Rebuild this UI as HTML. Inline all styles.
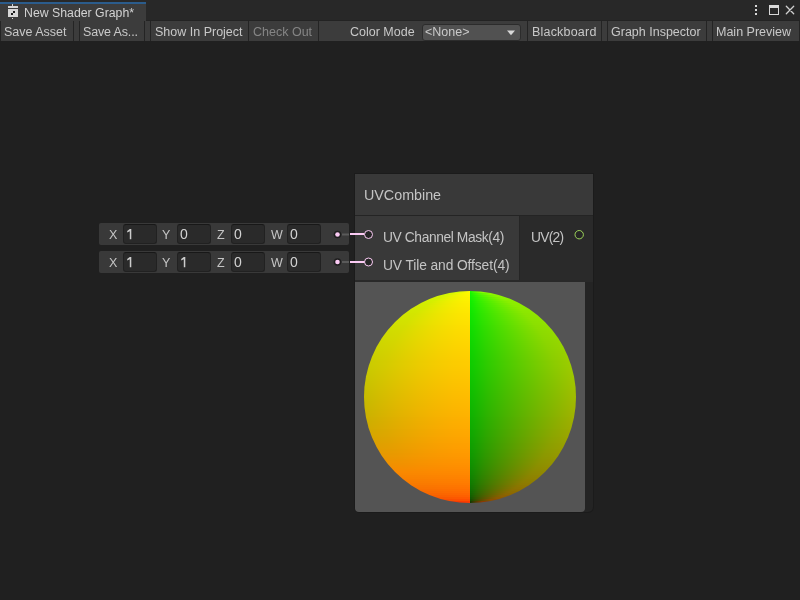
<!DOCTYPE html>
<html><head><meta charset="utf-8">
<style>
*{box-sizing:border-box;margin:0;padding:0}
html,body{width:800px;height:600px;overflow:hidden;background:#202020;font-family:"Liberation Sans",sans-serif;}
.a{position:absolute}
#top{left:0;top:0;width:800px;height:21px;background:#282828}
#tab{left:0;top:2px;width:146px;height:19px;background:#3c3c3c;border-top:2px solid #2b5c8c}
#tabtxt{left:24px;top:5px;font-size:12.3px;color:#d2d2d2;white-space:pre;line-height:16px}
#toolbar{left:0;top:20px;width:800px;height:21px;background:#3c3c3c;border-top:1px solid #232323}
.tb{position:absolute;top:22px;height:20px;font-size:12.5px;color:#c8c8c8;white-space:pre;line-height:20px}
.sep{position:absolute;top:21px;width:1px;height:20px;background:#242424}
.txt{position:absolute;white-space:pre;color:#c4c4c4}
#graph{left:0;top:41px;width:800px;height:559px;background:#202020}
.field{position:absolute;left:99px;width:250px;height:22px;background:#393939;border-radius:2px}
.inp{position:absolute;top:1px;height:20px;width:34px;background:#2a2a2a;border:1px solid #212121;border-top-color:#181818;border-radius:3px}
.lbl{position:absolute;font-size:12.5px;color:#c4c4c4;line-height:22px;top:1px}
.val{position:absolute;font-size:14px;color:#d2d2d2;line-height:20px;top:1px}
#node{left:355px;top:174px;width:238px;height:338px;background:#242424;border-radius:0 0 5px 5px;box-shadow:0 0 0 1px #1b1b1b}
.tb,.txt,.lbl,.val,#tabtxt{filter:grayscale(1)}
</style></head><body>
<div class="a" id="top"></div>
<div class="a" id="toolbar"></div>
<div class="a" id="tab"></div>
<svg class="a" style="left:8px;top:4px" width="11" height="16" viewBox="0 0 11 16">
<rect x="4" y="0" width="1" height="2" fill="#d6d6d6"/>
<rect x="0" y="2" width="10" height="2" fill="#d6d6d6"/>
<rect x="0" y="5" width="10" height="8" fill="#d6d6d6"/>
<rect x="5" y="7" width="2" height="2" fill="#1a1a1a"/>
<rect x="3" y="9" width="2" height="2" fill="#1a1a1a"/>
<rect x="4" y="14" width="1" height="1" fill="#d6d6d6"/>
</svg>
<div class="a" id="tabtxt">New Shader Graph*</div>
<!-- window icons -->
<svg class="a" style="left:750px;top:0px" width="50" height="20" viewBox="0 0 50 20">
<rect x="5" y="5" width="2" height="2" fill="#d8d8d8"/>
<rect x="5" y="9" width="2" height="2" fill="#d8d8d8"/>
<rect x="5" y="13" width="2" height="2" fill="#d8d8d8"/>
<rect x="19.5" y="5.5" width="9" height="9" fill="none" stroke="#d8d8d8" stroke-width="1"/>
<rect x="19" y="5" width="10" height="3" fill="#d8d8d8"/>
<path d="M36.3 6.3 L43.7 13.7 M43.7 6.3 L36.3 13.7" stroke="#d0d0d0" stroke-width="1.3" stroke-linecap="round"/>
</svg>
<div class="a" style="left:0;top:21px;width:1px;height:20px;background:#242424"></div>
<div class="sep" style="left:73px"></div>
<div class="sep" style="left:79px"></div>
<div class="sep" style="left:144px"></div>
<div class="sep" style="left:150px"></div>
<div class="sep" style="left:248px"></div>
<div class="sep" style="left:318px"></div>
<div class="sep" style="left:527px"></div>
<div class="sep" style="left:601px"></div>
<div class="sep" style="left:607px"></div>
<div class="sep" style="left:706px"></div>
<div class="sep" style="left:712px"></div>
<div class="a" style="left:799px;top:21px;width:1px;height:20px;background:#242424"></div>
<div class="tb" style="left:4px">Save Asset</div>
<div class="tb" style="left:83px;letter-spacing:-0.15px">Save As...</div>
<div class="tb" style="left:155px">Show In Project</div>
<div class="tb" style="left:253px;color:#858585">Check Out</div>
<div class="tb" style="left:350px">Color Mode</div>
<div class="a" style="left:422px;top:24px;width:99px;height:17px;background:#515151;border:1px solid #2c2c2c;border-radius:3px"></div>
<div class="tb" style="left:425px;top:23px;line-height:18px">&lt;None&gt;</div>
<svg class="a" style="left:506px;top:29.5px" width="10" height="6"><path d="M1 0.5 L9 0.5 L5 5.2 Z" fill="#d8d8d8"/></svg>
<div class="tb" style="left:532px;letter-spacing:0.2px">Blackboard</div>
<div class="tb" style="left:611px">Graph Inspector</div>
<div class="tb" style="left:716px">Main Preview</div>

<!-- fields -->
<div class="field" style="top:223px">
 <div class="lbl" style="left:10px">X</div><div class="inp" style="left:24px"></div><svg class="a" style="left:27.7px;top:5.9px" width="5" height="11" viewBox="0 0 5 11"><polygon points="0.2,2.0 2.8,0 4.3,0 4.3,10.2 2.8,10.2 2.8,2.2 0.2,3.4" fill="#cccccc"/></svg>
 <div class="lbl" style="left:63px">Y</div><div class="inp" style="left:78px"></div><div class="val" style="left:81px">0</div>
 <div class="lbl" style="left:118px">Z</div><div class="inp" style="left:132px"></div><div class="val" style="left:135px">0</div>
 <div class="lbl" style="left:172px">W</div><div class="inp" style="left:188px"></div><div class="val" style="left:191px">0</div>
</div>
<div class="field" style="top:251px">
 <div class="lbl" style="left:10px">X</div><div class="inp" style="left:24px"></div><svg class="a" style="left:27.7px;top:5.9px" width="5" height="11" viewBox="0 0 5 11"><polygon points="0.2,2.0 2.8,0 4.3,0 4.3,10.2 2.8,10.2 2.8,2.2 0.2,3.4" fill="#cccccc"/></svg>
 <div class="lbl" style="left:63px">Y</div><div class="inp" style="left:78px"></div><svg class="a" style="left:81.7px;top:5.9px" width="5" height="11" viewBox="0 0 5 11"><polygon points="0.2,2.0 2.8,0 4.3,0 4.3,10.2 2.8,10.2 2.8,2.2 0.2,3.4" fill="#cccccc"/></svg>
 <div class="lbl" style="left:118px">Z</div><div class="inp" style="left:132px"></div><div class="val" style="left:135px">0</div>
 <div class="lbl" style="left:172px">W</div><div class="inp" style="left:188px"></div><div class="val" style="left:191px">0</div>
</div>
<svg class="a" style="left:330px;top:222px" width="50" height="50" viewBox="0 0 50 50">
<circle cx="7.5" cy="12.5" r="3.8" fill="#1e1e1e"/><circle cx="7.5" cy="12.5" r="2.3" fill="#fbcbf4"/>
<rect x="12" y="11.5" width="7" height="2" fill="#5a5a5a"/>
<circle cx="7.5" cy="40" r="3.8" fill="#1e1e1e"/><circle cx="7.5" cy="40" r="2.3" fill="#fbcbf4"/>
<rect x="12" y="39" width="7" height="2" fill="#5a5a5a"/>
</svg>

<!-- node -->
<div class="a" id="node"></div>
<div class="a" style="left:355px;top:174px;width:238px;height:41px;background:#393939"></div>
<div class="a" style="left:355px;top:215px;width:238px;height:1px;background:#242424"></div>
<div class="a" style="left:355px;top:216px;width:164px;height:64px;background:#393939"></div>
<div class="a" style="left:519px;top:216px;width:74px;height:64px;background:#2a2a2a;border-left:1px solid #252525"></div>
<div class="a" style="left:355px;top:280px;width:238px;height:2px;background:#292929"></div>
<div class="txt" style="left:364px;top:186px;font-size:14.3px;line-height:18px">UVCombine</div>
<div class="txt" style="left:383px;top:230px;font-size:13.8px;line-height:16px;letter-spacing:-0.4px">UV Channel Mask(4)</div>
<div class="txt" style="left:383px;top:258px;font-size:13.8px;line-height:16px;letter-spacing:-0.1px">UV Tile and Offset(4)</div>
<div class="txt" style="left:531px;top:230px;font-size:13.8px;line-height:16px;letter-spacing:-0.75px">UV(2)</div>
<svg class="a" style="left:355px;top:216px" width="238" height="64" viewBox="0 0 238 64">
<circle cx="224.2" cy="18.7" r="4.2" fill="#262626" stroke="#9ed65a" stroke-width="1"/>
</svg>
<div class="a" style="left:355px;top:282px;width:230px;height:230px;background:#545454;border-radius:0 0 4px 4px;overflow:hidden">
 <div class="a" style="left:9px;top:9px;width:212px;height:212px;border-radius:50%;overflow:hidden">
 <style>#sph i{position:absolute;left:0;width:212px;height:2px;display:block}</style>
 <div id="sph">
<i style="top:0px;background:linear-gradient(90deg,#c7fa00 0.0px,#d4fa00 93.9px,#e0fa00 96.3px,#ebfa00 98.7px,#f4fa00 101.2px,#fbfa00 103.6px,#fffa00 106.0px,#0dfa00 106.0px,#2dfa00 108.4px,#47fa00 110.8px,#5ffa00 113.3px,#76fa00 115.7px,#8bfa00 118.1px,#a1fa00 212.0px)"></i>
<i style="top:2px;background:linear-gradient(90deg,#c7f600 0.0px,#d4f600 85.1px,#e0f600 89.3px,#ebf600 93.5px,#f4f600 97.7px,#fbf600 101.8px,#fff600 106.0px,#0df600 106.0px,#2df600 110.2px,#47f600 114.3px,#5ff600 118.5px,#76f600 122.7px,#8bf600 126.9px,#a1f600 212.0px)"></i>
<i style="top:4px;background:linear-gradient(90deg,#c7f400 0.0px,#d4f400 79.2px,#e0f400 84.6px,#ebf400 89.9px,#f4f400 95.3px,#fbf400 100.6px,#fff400 106.0px,#0df400 106.0px,#2df400 111.4px,#47f400 116.7px,#5ff400 122.1px,#76f400 127.4px,#8bf400 132.8px,#a1f400 212.0px)"></i>
<i style="top:6px;background:linear-gradient(90deg,#c7f100 0.0px,#d4f100 74.4px,#e0f100 80.7px,#ebf100 87.1px,#f4f100 93.4px,#fbf100 99.7px,#fff100 106.0px,#0df100 106.0px,#2df100 112.3px,#47f100 118.6px,#5ff100 124.9px,#76f100 131.3px,#8bf100 137.6px,#a1f100 212.0px)"></i>
<i style="top:8px;background:linear-gradient(90deg,#c7f000 0.0px,#d4f000 70.4px,#e0f000 77.5px,#ebf000 84.6px,#f4f000 91.8px,#fbf000 98.9px,#fff000 106.0px,#0df000 106.0px,#2df000 113.1px,#47f000 120.2px,#5ff000 127.4px,#76f000 134.5px,#8bf000 141.6px,#a1f000 212.0px)"></i>
<i style="top:10px;background:linear-gradient(90deg,#c7ee00 0.0px,#d4ee00 66.8px,#e0ee00 74.7px,#ebee00 82.5px,#f4ee00 90.3px,#fbee00 98.2px,#ffee00 106.0px,#0dee00 106.0px,#2dee00 113.8px,#47ee00 121.7px,#5fee00 129.5px,#76ee00 137.3px,#8bee00 145.2px,#a1ee00 212.0px)"></i>
<i style="top:12px;background:linear-gradient(90deg,#c7ec00 0.0px,#d4ec00 63.6px,#e0ec00 72.1px,#ebec00 80.6px,#f4ec00 89.0px,#fbec00 97.5px,#ffec00 106.0px,#0dec00 106.0px,#2dec00 114.5px,#47ec00 123.0px,#5fec00 131.4px,#76ec00 139.9px,#8bec00 148.4px,#a1ec00 212.0px)"></i>
<i style="top:14px;background:linear-gradient(90deg,#c7eb00 0.0px,#d4eb00 60.7px,#e0eb00 69.8px,#ebeb00 78.8px,#f4eb00 87.9px,#fbeb00 96.9px,#ffeb00 106.0px,#0deb00 106.0px,#2deb00 115.1px,#47eb00 124.1px,#5feb00 133.2px,#76eb00 142.2px,#8beb00 151.3px,#a1eb00 212.0px)"></i>
<i style="top:16px;background:linear-gradient(90deg,#c7e900 0.0px,#d4e900 58.0px,#e0e900 67.6px,#ebe900 77.2px,#f4e900 86.8px,#fbe900 96.4px,#ffe900 106.0px,#0de900 106.0px,#2de900 115.6px,#47e900 125.2px,#5fe900 134.8px,#76e900 144.4px,#8be900 154.0px,#a1e900 212.0px)"></i>
<i style="top:18px;background:linear-gradient(90deg,#c7e800 0.0px,#d4e800 55.5px,#e0e800 65.6px,#ebe800 75.7px,#f4e800 85.8px,#fbe800 95.9px,#ffe800 106.0px,#0de800 106.0px,#2de800 116.1px,#47e800 126.2px,#5fe800 136.3px,#76e800 146.4px,#8be800 156.5px,#a1e800 212.0px)"></i>
<i style="top:20px;background:linear-gradient(90deg,#c7e700 0.0px,#d4e700 53.2px,#e0e700 63.8px,#ebe700 74.3px,#f4e700 84.9px,#fbe700 95.4px,#ffe700 106.0px,#0de700 106.0px,#2de700 116.6px,#47e700 127.1px,#5fe700 137.7px,#76e700 148.2px,#8be700 158.8px,#a1e700 212.0px)"></i>
<i style="top:22px;background:linear-gradient(90deg,#c7e500 0.0px,#d4e500 51.1px,#e0e500 62.0px,#ebe500 73.0px,#f4e500 84.0px,#fbe500 95.0px,#ffe500 106.0px,#0de500 106.0px,#2de500 117.0px,#47e500 128.0px,#5fe500 139.0px,#76e500 150.0px,#8be500 160.9px,#a1e500 212.0px)"></i>
<i style="top:24px;background:linear-gradient(90deg,#c7e400 0.0px,#d4e400 49.0px,#e0e400 60.4px,#ebe400 71.8px,#f4e400 83.2px,#fbe400 94.6px,#ffe400 106.0px,#0de400 106.0px,#2de400 117.4px,#47e400 128.8px,#5fe400 140.2px,#76e400 151.6px,#8be400 163.0px,#a1e400 212.0px)"></i>
<i style="top:26px;background:linear-gradient(90deg,#c7e300 0.0px,#d4e300 47.1px,#e0e300 58.9px,#ebe300 70.7px,#f4e300 82.4px,#fbe300 94.2px,#ffe300 106.0px,#0de300 106.0px,#2de300 117.8px,#47e300 129.6px,#5fe300 141.3px,#76e300 153.1px,#8be300 164.9px,#a1e300 212.0px)"></i>
<i style="top:28px;background:linear-gradient(90deg,#c7e200 0.0px,#d4e200 45.3px,#e0e200 57.4px,#ebe200 69.6px,#f4e200 81.7px,#fbe200 93.9px,#ffe200 106.0px,#0de200 106.0px,#2de200 118.1px,#47e200 130.3px,#5fe200 142.4px,#76e200 154.6px,#8be200 166.7px,#a1e200 212.0px)"></i>
<i style="top:30px;background:linear-gradient(90deg,#c7e100 0.0px,#d4e100 43.6px,#e0e100 56.1px,#ebe100 68.5px,#f4e100 81.0px,#fbe100 93.5px,#ffe100 106.0px,#0de100 106.0px,#2de100 118.5px,#47e100 131.0px,#5fe100 143.5px,#76e100 155.9px,#8be100 168.4px,#a1e100 212.0px)"></i>
<i style="top:32px;background:linear-gradient(90deg,#c7e000 0.0px,#d4e000 42.0px,#e0e000 54.8px,#ebe000 67.6px,#f4e000 80.4px,#fbe000 93.2px,#ffe000 106.0px,#0de000 106.0px,#2de000 118.8px,#47e000 131.6px,#5fe000 144.4px,#76e000 157.2px,#8be000 170.0px,#a1e000 212.0px)"></i>
<i style="top:34px;background:linear-gradient(90deg,#c7de00 0.0px,#d4de00 40.4px,#e0de00 53.5px,#ebde00 66.6px,#f4de00 79.8px,#fbde00 92.9px,#ffde00 106.0px,#0dde00 106.0px,#2dde00 119.1px,#47de00 132.2px,#5fde00 145.4px,#76de00 158.5px,#8bde00 171.6px,#a1de00 212.0px)"></i>
<i style="top:36px;background:linear-gradient(90deg,#c7dd00 0.0px,#d4dd00 38.9px,#e0dd00 52.4px,#ebdd00 65.8px,#f4dd00 79.2px,#fbdd00 92.6px,#ffdd00 106.0px,#0ddd00 106.0px,#2ddd00 119.4px,#47dd00 132.8px,#5fdd00 146.2px,#76dd00 159.6px,#8bdd00 173.1px,#a1dd00 212.0px)"></i>
<i style="top:38px;background:linear-gradient(90deg,#c7dc00 0.0px,#d4dc00 37.5px,#e0dc00 51.2px,#ebdc00 64.9px,#f4dc00 78.6px,#fbdc00 92.3px,#ffdc00 106.0px,#0ddc00 106.0px,#2ddc00 119.7px,#47dc00 133.4px,#5fdc00 147.1px,#76dc00 160.8px,#8bdc00 174.5px,#a1dc00 212.0px)"></i>
<i style="top:40px;background:linear-gradient(90deg,#c7db00 0.0px,#d4db00 36.2px,#e0db00 50.2px,#ebdb00 64.1px,#f4db00 78.1px,#fbdb00 92.0px,#ffdb00 106.0px,#0ddb00 106.0px,#2ddb00 120.0px,#47db00 133.9px,#5fdb00 147.9px,#76db00 161.8px,#8bdb00 175.8px,#a1db00 212.0px)"></i>
<i style="top:42px;background:linear-gradient(90deg,#c7da00 0.0px,#d4da00 35.0px,#e0da00 49.2px,#ebda00 63.4px,#f4da00 77.6px,#fbda00 91.8px,#ffda00 106.0px,#0dda00 106.0px,#2dda00 120.2px,#47da00 134.4px,#5fda00 148.6px,#76da00 162.8px,#8bda00 177.0px,#a1da00 212.0px)"></i>
<i style="top:44px;background:linear-gradient(90deg,#c7d900 0.0px,#d4d900 33.8px,#e0d900 48.2px,#ebd900 62.7px,#f4d900 77.1px,#fbd900 91.6px,#ffd900 106.0px,#0dd900 106.0px,#2dd900 120.4px,#47d900 134.9px,#5fd900 149.3px,#76d900 163.8px,#8bd900 178.2px,#a1d900 212.0px)"></i>
<i style="top:46px;background:linear-gradient(90deg,#c7d800 0.0px,#d4d800 32.6px,#e0d800 47.3px,#ebd800 62.0px,#f4d800 76.6px,#fbd800 91.3px,#ffd800 106.0px,#0dd800 106.0px,#2dd800 120.7px,#47d800 135.4px,#5fd800 150.0px,#76d800 164.7px,#8bd800 179.4px,#a1d800 212.0px)"></i>
<i style="top:48px;background:linear-gradient(90deg,#c7d700 0.0px,#d4d700 31.5px,#e0d700 46.4px,#ebd700 61.3px,#f4d700 76.2px,#fbd700 91.1px,#ffd700 106.0px,#0dd700 106.0px,#2dd700 120.9px,#47d700 135.8px,#5fd700 150.7px,#76d700 165.6px,#8bd700 180.5px,#a1d700 212.0px)"></i>
<i style="top:50px;background:linear-gradient(90deg,#c7d600 0.0px,#d4d600 30.5px,#e0d600 45.6px,#ebd600 60.7px,#f4d600 75.8px,#fbd600 90.9px,#ffd600 106.0px,#0dd600 106.0px,#2dd600 121.1px,#47d600 136.2px,#5fd600 151.3px,#76d600 166.4px,#8bd600 181.5px,#a1d600 212.0px)"></i>
<i style="top:52px;background:linear-gradient(90deg,#c7d500 0.0px,#d4d500 29.5px,#e0d500 44.8px,#ebd500 60.1px,#f4d500 75.4px,#fbd500 90.7px,#ffd500 106.0px,#0dd500 106.0px,#2dd500 121.3px,#47d500 136.6px,#5fd500 151.9px,#76d500 167.2px,#8bd500 182.5px,#a1d500 212.0px)"></i>
<i style="top:54px;background:linear-gradient(90deg,#c7d400 0.0px,#d4d400 28.6px,#e0d400 44.1px,#ebd400 59.5px,#f4d400 75.0px,#fbd400 90.5px,#ffd400 106.0px,#0dd400 106.0px,#2dd400 121.5px,#47d400 137.0px,#5fd400 152.5px,#76d400 167.9px,#8bd400 183.4px,#a1d400 212.0px)"></i>
<i style="top:56px;background:linear-gradient(90deg,#c7d300 0.0px,#d4d300 27.7px,#e0d300 43.3px,#ebd300 59.0px,#f4d300 74.7px,#fbd300 90.3px,#ffd300 106.0px,#0dd300 106.0px,#2dd300 121.7px,#47d300 137.3px,#5fd300 153.0px,#76d300 168.7px,#8bd300 184.3px,#a1d300 212.0px)"></i>
<i style="top:58px;background:linear-gradient(90deg,#c7d200 0.0px,#d4d200 26.8px,#e0d200 42.7px,#ebd200 58.5px,#f4d200 74.3px,#fbd200 90.2px,#ffd200 106.0px,#0dd200 106.0px,#2dd200 121.8px,#47d200 137.7px,#5fd200 153.5px,#76d200 169.3px,#8bd200 185.2px,#a1d200 212.0px)"></i>
<i style="top:60px;background:linear-gradient(90deg,#c7d100 0.0px,#d4d100 26.0px,#e0d100 42.0px,#ebd100 58.0px,#f4d100 74.0px,#fbd100 90.0px,#ffd100 106.0px,#0dd100 106.0px,#2dd100 122.0px,#47d100 138.0px,#5fd100 154.0px,#76d100 170.0px,#8bd100 186.0px,#a1d100 212.0px)"></i>
<i style="top:62px;background:linear-gradient(90deg,#c7d000 0.0px,#d4d000 25.3px,#e0d000 41.4px,#ebd000 57.6px,#f4d000 73.7px,#fbd000 89.9px,#ffd000 106.0px,#0dd000 106.0px,#2dd000 122.1px,#47d000 138.3px,#5fd000 154.4px,#76d000 170.6px,#8bd000 186.7px,#a1d000 212.0px)"></i>
<i style="top:64px;background:linear-gradient(90deg,#c7cf00 0.0px,#d4cf00 24.5px,#e0cf00 40.8px,#ebcf00 57.1px,#f4cf00 73.4px,#fbcf00 89.7px,#ffcf00 106.0px,#0dcf00 106.0px,#2dcf00 122.3px,#47cf00 138.6px,#5fcf00 154.9px,#76cf00 171.2px,#8bcf00 187.5px,#a1cf00 212.0px)"></i>
<i style="top:66px;background:linear-gradient(90deg,#c7ce00 0.0px,#d4ce00 23.9px,#e0ce00 40.3px,#ebce00 56.7px,#f4ce00 73.1px,#fbce00 89.6px,#ffce00 106.0px,#0dce00 106.0px,#2dce00 122.4px,#47ce00 138.9px,#5fce00 155.3px,#76ce00 171.7px,#8bce00 188.1px,#a1ce00 212.0px)"></i>
<i style="top:68px;background:linear-gradient(90deg,#c7cd00 0.0px,#d4cd00 23.2px,#e0cd00 39.8px,#ebcd00 56.3px,#f4cd00 72.9px,#fbcd00 89.4px,#ffcd00 106.0px,#0dcd00 106.0px,#2dcd00 122.6px,#47cd00 139.1px,#5fcd00 155.7px,#76cd00 172.2px,#8bcd00 188.8px,#a1cd00 212.0px)"></i>
<i style="top:70px;background:linear-gradient(90deg,#c7cc00 0.0px,#d4cc00 22.6px,#e0cc00 39.3px,#ebcc00 56.0px,#f4cc00 72.6px,#fbcc00 89.3px,#ffcc00 106.0px,#0dcc00 106.0px,#2dcc00 122.7px,#47cc00 139.4px,#5fcc00 156.0px,#76cc00 172.7px,#8bcc00 189.4px,#a1cc00 212.0px)"></i>
<i style="top:72px;background:linear-gradient(90deg,#c7cc00 0.0px,#d4cc00 22.1px,#e0cc00 38.8px,#ebcc00 55.6px,#f4cc00 72.4px,#fbcc00 89.2px,#ffcc00 106.0px,#0dcc00 106.0px,#2dcc00 122.8px,#47cc00 139.6px,#5fcc00 156.4px,#76cc00 173.2px,#8bcc00 189.9px,#a1cc00 212.0px)"></i>
<i style="top:74px;background:linear-gradient(90deg,#c7cb00 0.0px,#d4cb00 21.5px,#e0cb00 38.4px,#ebcb00 55.3px,#f4cb00 72.2px,#fbcb00 89.1px,#ffcb00 106.0px,#0dcb00 106.0px,#2dcb00 122.9px,#47cb00 139.8px,#5fcb00 156.7px,#76cb00 173.6px,#8bcb00 190.5px,#a1cb00 212.0px)"></i>
<i style="top:76px;background:linear-gradient(90deg,#c7ca00 0.0px,#d4ca00 21.0px,#e0ca00 38.0px,#ebca00 55.0px,#f4ca00 72.0px,#fbca00 89.0px,#ffca00 106.0px,#0dca00 106.0px,#2dca00 123.0px,#47ca00 140.0px,#5fca00 157.0px,#76ca00 174.0px,#8bca00 191.0px,#a1ca00 212.0px)"></i>
<i style="top:78px;background:linear-gradient(90deg,#c7c900 0.0px,#d4c900 20.6px,#e0c900 37.7px,#ebc900 54.7px,#f4c900 71.8px,#fbc900 88.9px,#ffc900 106.0px,#0dc900 106.0px,#2dc900 123.1px,#47c900 140.2px,#5fc900 157.3px,#76c900 174.3px,#8bc900 191.4px,#a1c900 212.0px)"></i>
<i style="top:80px;background:linear-gradient(90deg,#c7c800 0.0px,#d4c800 20.2px,#e0c800 37.3px,#ebc800 54.5px,#f4c800 71.7px,#fbc800 88.8px,#ffc800 106.0px,#0dc800 106.0px,#2dc800 123.2px,#47c800 140.3px,#5fc800 157.5px,#76c800 174.7px,#8bc800 191.8px,#a1c800 212.0px)"></i>
<i style="top:82px;background:linear-gradient(90deg,#c7c700 0.0px,#d4c700 19.8px,#e0c700 37.0px,#ebc700 54.3px,#f4c700 71.5px,#fbc700 88.8px,#ffc700 106.0px,#0dc700 106.0px,#2dc700 123.2px,#47c700 140.5px,#5fc700 157.7px,#76c700 175.0px,#8bc700 192.2px,#a1c700 212.0px)"></i>
<i style="top:84px;background:linear-gradient(90deg,#c7c600 0.0px,#d4c600 19.4px,#e0c600 36.7px,#ebc600 54.1px,#f4c600 71.4px,#fbc600 88.7px,#ffc600 106.0px,#0dc600 106.0px,#2dc600 123.3px,#47c600 140.6px,#5fc600 157.9px,#76c600 175.3px,#8bc600 192.6px,#a1c600 212.0px)"></i>
<i style="top:86px;background:linear-gradient(90deg,#c7c500 0.0px,#d4c500 19.1px,#e0c500 36.5px,#ebc500 53.9px,#f4c500 71.2px,#fbc500 88.6px,#ffc500 106.0px,#0dc500 106.0px,#2dc500 123.4px,#47c500 140.8px,#5fc500 158.1px,#76c500 175.5px,#8bc500 192.9px,#a1c500 212.0px)"></i>
<i style="top:88px;background:linear-gradient(90deg,#c7c400 0.0px,#d4c400 18.8px,#e0c400 36.2px,#ebc400 53.7px,#f4c400 71.1px,#fbc400 88.6px,#ffc400 106.0px,#0dc400 106.0px,#2dc400 123.4px,#47c400 140.9px,#5fc400 158.3px,#76c400 175.8px,#8bc400 193.2px,#a1c400 212.0px)"></i>
<i style="top:90px;background:linear-gradient(90deg,#c7c300 0.0px,#d4c300 18.6px,#e0c300 36.0px,#ebc300 53.5px,#f4c300 71.0px,#fbc300 88.5px,#ffc300 106.0px,#0dc300 106.0px,#2dc300 123.5px,#47c300 141.0px,#5fc300 158.5px,#76c300 176.0px,#8bc300 193.4px,#a1c300 212.0px)"></i>
<i style="top:92px;background:linear-gradient(90deg,#c7c200 0.0px,#d4c200 18.3px,#e0c200 35.9px,#ebc200 53.4px,#f4c200 70.9px,#fbc200 88.5px,#ffc200 106.0px,#0dc200 106.0px,#2dc200 123.5px,#47c200 141.1px,#5fc200 158.6px,#76c200 176.1px,#8bc200 193.7px,#a1c200 212.0px)"></i>
<i style="top:94px;background:linear-gradient(90deg,#c7c100 0.0px,#d4c100 18.1px,#e0c100 35.7px,#ebc100 53.3px,#f4c100 70.9px,#fbc100 88.4px,#ffc100 106.0px,#0dc100 106.0px,#2dc100 123.6px,#47c100 141.1px,#5fc100 158.7px,#76c100 176.3px,#8bc100 193.9px,#a1c100 212.0px)"></i>
<i style="top:96px;background:linear-gradient(90deg,#c7c000 0.0px,#d4c000 18.0px,#e0c000 35.6px,#ebc000 53.2px,#f4c000 70.8px,#fbc000 88.4px,#ffc000 106.0px,#0dc000 106.0px,#2dc000 123.6px,#47c000 141.2px,#5fc000 158.8px,#76c000 176.4px,#8bc000 194.0px,#a1c000 212.0px)"></i>
<i style="top:98px;background:linear-gradient(90deg,#c7bf00 0.0px,#d4bf00 17.9px,#e0bf00 35.5px,#ebbf00 53.1px,#f4bf00 70.7px,#fbbf00 88.4px,#ffbf00 106.0px,#0dbf00 106.0px,#2dbf00 123.6px,#47bf00 141.3px,#5fbf00 158.9px,#76bf00 176.5px,#8bbf00 194.1px,#a1bf00 212.0px)"></i>
<i style="top:100px;background:linear-gradient(90deg,#c7be00 0.0px,#d4be00 17.8px,#e0be00 35.4px,#ebbe00 53.1px,#f4be00 70.7px,#fbbe00 88.4px,#ffbe00 106.0px,#0dbe00 106.0px,#2dbe00 123.6px,#47be00 141.3px,#5fbe00 158.9px,#76be00 176.6px,#8bbe00 194.2px,#a1be00 212.0px)"></i>
<i style="top:102px;background:linear-gradient(90deg,#c7bd00 0.0px,#d4bd00 17.7px,#e0bd00 35.4px,#ebbd00 53.0px,#f4bd00 70.7px,#fbbd00 88.3px,#ffbd00 106.0px,#0dbd00 106.0px,#2dbd00 123.7px,#47bd00 141.3px,#5fbd00 159.0px,#76bd00 176.6px,#8bbd00 194.3px,#a1bd00 212.0px)"></i>
<i style="top:104px;background:linear-gradient(90deg,#c7bc00 0.0px,#d4bc00 17.7px,#e0bc00 35.3px,#ebbc00 53.0px,#f4bc00 70.7px,#fbbc00 88.3px,#ffbc00 106.0px,#0dbc00 106.0px,#2dbc00 123.7px,#47bc00 141.3px,#5fbc00 159.0px,#76bc00 176.7px,#8bbc00 194.3px,#a1bc00 212.0px)"></i>
<i style="top:106px;background:linear-gradient(90deg,#c7bb00 0.0px,#d4bb00 17.7px,#e0bb00 35.3px,#ebbb00 53.0px,#f4bb00 70.7px,#fbbb00 88.3px,#ffbb00 106.0px,#0dbb00 106.0px,#2dbb00 123.7px,#47bb00 141.3px,#5fbb00 159.0px,#76bb00 176.7px,#8bbb00 194.3px,#a1bb00 212.0px)"></i>
<i style="top:108px;background:linear-gradient(90deg,#c7ba00 0.0px,#d4ba00 17.7px,#e1ba00 35.4px,#ebba00 53.0px,#f4ba00 70.7px,#fbba00 88.3px,#ffba00 106.0px,#0dba00 106.0px,#2dba00 123.7px,#47ba00 141.3px,#5fba00 159.0px,#76ba00 176.6px,#8bba00 194.3px,#a1ba00 212.0px)"></i>
<i style="top:110px;background:linear-gradient(90deg,#c7b900 0.0px,#d4b900 17.8px,#e1b900 35.4px,#ebb900 53.1px,#f4b900 70.7px,#fbb900 88.4px,#ffb900 106.0px,#0db900 106.0px,#2db900 123.6px,#47b900 141.3px,#5fb900 158.9px,#76b900 176.6px,#8bb900 194.2px,#a1b900 212.0px)"></i>
<i style="top:112px;background:linear-gradient(90deg,#c7b800 0.0px,#d5b800 17.9px,#e1b800 35.5px,#ebb800 53.1px,#f4b800 70.7px,#fbb800 88.4px,#ffb800 106.0px,#0db800 106.0px,#2db800 123.6px,#47b800 141.3px,#5fb800 158.9px,#76b800 176.5px,#8bb800 194.1px,#a1b800 212.0px)"></i>
<i style="top:114px;background:linear-gradient(90deg,#c8b700 0.0px,#d5b700 18.0px,#e1b700 35.6px,#ebb700 53.2px,#f4b700 70.8px,#fbb700 88.4px,#ffb700 106.0px,#0db700 106.0px,#2db700 123.6px,#47b700 141.2px,#5fb700 158.8px,#76b700 176.4px,#8bb700 194.0px,#a1b700 212.0px)"></i>
<i style="top:116px;background:linear-gradient(90deg,#c8b600 0.0px,#d5b600 18.1px,#e1b600 35.7px,#ecb600 53.3px,#f4b600 70.9px,#fbb600 88.4px,#ffb600 106.0px,#0db600 106.0px,#2db600 123.6px,#47b600 141.1px,#5fb600 158.7px,#76b600 176.3px,#8bb600 193.9px,#a1b600 212.0px)"></i>
<i style="top:118px;background:linear-gradient(90deg,#c8b500 0.0px,#d5b500 18.3px,#e1b500 35.9px,#ecb500 53.4px,#f4b500 70.9px,#fbb500 88.5px,#ffb500 106.0px,#0db500 106.0px,#2db500 123.5px,#47b500 141.1px,#5fb500 158.6px,#76b500 176.1px,#8bb500 193.7px,#a1b500 212.0px)"></i>
<i style="top:120px;background:linear-gradient(90deg,#c9b400 0.0px,#d6b400 18.6px,#e2b400 36.0px,#ecb400 53.5px,#f5b400 71.0px,#fbb400 88.5px,#ffb400 106.0px,#0db400 106.0px,#2db400 123.5px,#47b400 141.0px,#5fb400 158.5px,#76b400 176.0px,#8bb400 193.4px,#a1b400 212.0px)"></i>
<i style="top:122px;background:linear-gradient(90deg,#c9b300 0.0px,#d6b300 18.8px,#e2b300 36.2px,#ecb300 53.7px,#f5b300 71.1px,#fbb300 88.6px,#ffb300 106.0px,#0db300 106.0px,#2db300 123.4px,#47b300 140.9px,#5fb300 158.3px,#76b300 175.8px,#8bb300 193.2px,#a1b300 212.0px)"></i>
<i style="top:124px;background:linear-gradient(90deg,#cab200 0.0px,#d7b200 19.1px,#e2b200 36.5px,#ecb200 53.9px,#f5b200 71.2px,#fbb200 88.6px,#ffb200 106.0px,#0db200 106.0px,#2db200 123.4px,#47b200 140.8px,#5fb200 158.1px,#76b200 175.5px,#8bb200 192.9px,#a1b200 212.0px)"></i>
<i style="top:126px;background:linear-gradient(90deg,#cbb000 0.0px,#d7b000 19.4px,#e2b000 36.7px,#ecb000 54.1px,#f5b000 71.4px,#fbb000 88.7px,#ffb000 106.0px,#0db000 106.0px,#2db000 123.3px,#47b000 140.6px,#5fb000 157.9px,#76b000 175.3px,#8bb000 192.6px,#a1b000 212.0px)"></i>
<i style="top:128px;background:linear-gradient(90deg,#cbaf00 0.0px,#d8af00 19.8px,#e3af00 37.0px,#edaf00 54.3px,#f5af00 71.5px,#fbaf00 88.8px,#ffaf00 106.0px,#0daf00 106.0px,#2daf00 123.2px,#47af00 140.5px,#5faf00 157.7px,#76af00 175.0px,#8baf00 192.2px,#a1af00 212.0px)"></i>
<i style="top:130px;background:linear-gradient(90deg,#ccae00 0.0px,#d8ae00 20.2px,#e3ae00 37.3px,#edae00 54.5px,#f5ae00 71.7px,#fcae00 88.8px,#ffae00 106.0px,#0dae00 106.0px,#2dae00 123.2px,#47ae00 140.3px,#5fae00 157.5px,#76ae00 174.7px,#8bae00 191.8px,#a1ae00 212.0px)"></i>
<i style="top:132px;background:linear-gradient(90deg,#cdad00 0.0px,#d9ad00 20.6px,#e4ad00 37.7px,#edad00 54.7px,#f5ad00 71.8px,#fcad00 88.9px,#ffad00 106.0px,#0dad00 106.0px,#2dad00 123.1px,#47ad00 140.2px,#5fad00 157.3px,#76ad00 174.3px,#8bad00 191.4px,#a1ad00 212.0px)"></i>
<i style="top:134px;background:linear-gradient(90deg,#ceac00 0.0px,#daac00 21.0px,#e4ac00 38.0px,#eeac00 55.0px,#f6ac00 72.0px,#fcac00 89.0px,#ffac00 106.0px,#0dac00 106.0px,#2dac00 123.0px,#47ac00 140.0px,#5fac00 157.0px,#76ac00 174.0px,#8bac00 191.0px,#a1ac00 212.0px)"></i>
<i style="top:136px;background:linear-gradient(90deg,#cfab00 0.0px,#dbab00 21.5px,#e5ab00 38.4px,#eeab00 55.3px,#f6ab00 72.2px,#fcab00 89.1px,#ffab00 106.0px,#0dab00 106.0px,#2dab00 122.9px,#47ab00 139.8px,#5fab00 156.7px,#76ab00 173.6px,#8bab00 190.5px,#a1ab00 212.0px)"></i>
<i style="top:138px;background:linear-gradient(90deg,#d0a900 0.0px,#dba900 22.1px,#e5a900 38.8px,#eea900 55.6px,#f6a900 72.4px,#fca900 89.2px,#ffa900 106.0px,#0da900 106.0px,#2da900 122.8px,#47a900 139.6px,#5fa900 156.4px,#76a900 173.2px,#8ba900 189.9px,#a1a900 212.0px)"></i>
<i style="top:140px;background:linear-gradient(90deg,#d1a800 0.0px,#dca800 22.6px,#e6a800 39.3px,#efa800 56.0px,#f6a800 72.6px,#fca800 89.3px,#ffa800 106.0px,#0da800 106.0px,#2da800 122.7px,#47a800 139.4px,#5fa800 156.0px,#76a800 172.7px,#8ba800 189.4px,#a1a800 212.0px)"></i>
<i style="top:142px;background:linear-gradient(90deg,#d3a700 0.0px,#dda700 23.2px,#e7a700 39.8px,#efa700 56.3px,#f6a700 72.9px,#fca700 89.4px,#ffa700 106.0px,#0da700 106.0px,#2da700 122.6px,#47a700 139.1px,#5fa700 155.7px,#76a700 172.2px,#8ba700 188.8px,#a1a700 212.0px)"></i>
<i style="top:144px;background:linear-gradient(90deg,#d4a600 0.0px,#dea600 23.9px,#e7a600 40.3px,#f0a600 56.7px,#f7a600 73.1px,#fca600 89.6px,#ffa600 106.0px,#0da600 106.0px,#2da600 122.4px,#47a600 138.9px,#5fa600 155.3px,#76a600 171.7px,#8ba600 188.1px,#a1a600 212.0px)"></i>
<i style="top:146px;background:linear-gradient(90deg,#d5a400 0.0px,#dfa400 24.5px,#e8a400 40.8px,#f0a400 57.1px,#f7a400 73.4px,#fca400 89.7px,#ffa400 106.0px,#0da400 106.0px,#2da400 122.3px,#47a400 138.6px,#5fa400 154.9px,#76a400 171.2px,#8ba400 187.5px,#a1a400 212.0px)"></i>
<i style="top:148px;background:linear-gradient(90deg,#d7a300 0.0px,#e0a300 25.3px,#e9a300 41.4px,#f1a300 57.6px,#f7a300 73.7px,#fca300 89.9px,#ffa300 106.0px,#0da300 106.0px,#2da300 122.1px,#47a300 138.3px,#5fa300 154.4px,#76a300 170.6px,#8ba300 186.7px,#a1a300 212.0px)"></i>
<i style="top:150px;background:linear-gradient(90deg,#d8a200 0.0px,#e1a200 26.0px,#eaa200 42.0px,#f1a200 58.0px,#f8a200 74.0px,#fca200 90.0px,#ffa200 106.0px,#0da200 106.0px,#2da200 122.0px,#47a200 138.0px,#5fa200 154.0px,#76a200 170.0px,#8ba200 186.0px,#a1a200 212.0px)"></i>
<i style="top:152px;background:linear-gradient(90deg,#daa000 0.0px,#e3a000 26.8px,#eba000 42.7px,#f2a000 58.5px,#f8a000 74.3px,#fca000 90.2px,#ffa000 106.0px,#0da000 106.0px,#2da000 121.8px,#47a000 137.7px,#5fa000 153.5px,#76a000 169.3px,#8ba000 185.2px,#a1a000 212.0px)"></i>
<i style="top:154px;background:linear-gradient(90deg,#db9f00 0.0px,#e49f00 27.7px,#ec9f00 43.3px,#f29f00 59.0px,#f89f00 74.7px,#fd9f00 90.3px,#ff9f00 106.0px,#0d9f00 106.0px,#2d9f00 121.7px,#479f00 137.3px,#5f9f00 153.0px,#769f00 168.7px,#8b9f00 184.3px,#a19f00 212.0px)"></i>
<i style="top:156px;background:linear-gradient(90deg,#dd9e00 0.0px,#e59e00 28.6px,#ec9e00 44.1px,#f39e00 59.5px,#f89e00 75.0px,#fd9e00 90.5px,#ff9e00 106.0px,#0d9e00 106.0px,#2d9e00 121.5px,#479e00 137.0px,#5f9e00 152.5px,#769e00 167.9px,#8b9e00 183.4px,#a19e00 212.0px)"></i>
<i style="top:158px;background:linear-gradient(90deg,#df9c00 0.0px,#e69c00 29.5px,#ed9c00 44.8px,#f49c00 60.1px,#f99c00 75.4px,#fd9c00 90.7px,#ff9c00 106.0px,#0d9c00 106.0px,#2d9c00 121.3px,#479c00 136.6px,#5f9c00 151.9px,#769c00 167.2px,#8b9c00 182.5px,#a19c00 212.0px)"></i>
<i style="top:160px;background:linear-gradient(90deg,#e19b00 0.0px,#e89b00 30.5px,#ee9b00 45.6px,#f49b00 60.7px,#f99b00 75.8px,#fd9b00 90.9px,#ff9b00 106.0px,#0d9b00 106.0px,#2d9b00 121.1px,#479b00 136.2px,#5f9b00 151.3px,#769b00 166.4px,#8b9b00 181.5px,#a19b00 212.0px)"></i>
<i style="top:162px;background:linear-gradient(90deg,#e29900 0.0px,#e99900 31.5px,#ef9900 46.4px,#f59900 61.3px,#fa9900 76.2px,#fd9900 91.1px,#ff9900 106.0px,#0d9900 106.0px,#2d9900 120.9px,#479900 135.8px,#5f9900 150.7px,#769900 165.6px,#8b9900 180.5px,#a19900 212.0px)"></i>
<i style="top:164px;background:linear-gradient(90deg,#e49800 0.0px,#eb9800 32.6px,#f19800 47.3px,#f69800 62.0px,#fa9800 76.6px,#fd9800 91.3px,#ff9800 106.0px,#0d9800 106.0px,#2d9800 120.7px,#479800 135.4px,#5f9800 150.0px,#769800 164.7px,#8b9800 179.4px,#a19800 212.0px)"></i>
<i style="top:166px;background:linear-gradient(90deg,#e69600 0.0px,#ec9600 33.8px,#f29600 48.2px,#f69600 62.7px,#fa9600 77.1px,#fd9600 91.6px,#ff9600 106.0px,#0d9600 106.0px,#2d9600 120.4px,#479600 134.9px,#5f9600 149.3px,#769600 163.8px,#8b9600 178.2px,#a19600 212.0px)"></i>
<i style="top:168px;background:linear-gradient(90deg,#e99400 0.0px,#ee9400 35.0px,#f39400 49.2px,#f79400 63.4px,#fb9400 77.6px,#fd9400 91.8px,#ff9400 106.0px,#0d9400 106.0px,#2d9400 120.2px,#479400 134.4px,#5f9400 148.6px,#769400 162.8px,#8b9400 177.0px,#a19400 212.0px)"></i>
<i style="top:170px;background:linear-gradient(90deg,#eb9300 0.0px,#f09300 36.2px,#f49300 50.2px,#f89300 64.1px,#fb9300 78.1px,#fe9300 92.0px,#ff9300 106.0px,#0d9300 106.0px,#2d9300 120.0px,#479300 133.9px,#5f9300 147.9px,#769300 161.8px,#8b9300 175.8px,#a19300 212.0px)"></i>
<i style="top:172px;background:linear-gradient(90deg,#ed9100 0.0px,#f19100 37.5px,#f59100 51.2px,#f99100 64.9px,#fc9100 78.6px,#fe9100 92.3px,#ff9100 106.0px,#0d9100 106.0px,#2d9100 119.7px,#479100 133.4px,#5f9100 147.1px,#769100 160.8px,#8b9100 174.5px,#a19100 212.0px)"></i>
<i style="top:174px;background:linear-gradient(90deg,#ef8f00 0.0px,#f38f00 38.9px,#f68f00 52.4px,#f98f00 65.8px,#fc8f00 79.2px,#fe8f00 92.6px,#ff8f00 106.0px,#0d8f00 106.0px,#2d8f00 119.4px,#478f00 132.8px,#5f8f00 146.2px,#768f00 159.6px,#8b8f00 173.1px,#a18f00 212.0px)"></i>
<i style="top:176px;background:linear-gradient(90deg,#f28d00 0.0px,#f58d00 40.4px,#f88d00 53.5px,#fa8d00 66.6px,#fc8d00 79.8px,#fe8d00 92.9px,#ff8d00 106.0px,#0d8d00 106.0px,#2d8d00 119.1px,#478d00 132.2px,#5f8d00 145.4px,#768d00 158.5px,#8b8d00 171.6px,#a18d00 212.0px)"></i>
<i style="top:178px;background:linear-gradient(90deg,#f48b00 0.0px,#f78b00 42.0px,#f98b00 54.8px,#fb8b00 67.6px,#fd8b00 80.4px,#fe8b00 93.2px,#ff8b00 106.0px,#0d8b00 106.0px,#2d8b00 118.8px,#478b00 131.6px,#5f8b00 144.4px,#768b00 157.2px,#8b8b00 170.0px,#a18b00 212.0px)"></i>
<i style="top:180px;background:linear-gradient(90deg,#f78900 0.0px,#f98900 43.6px,#fa8900 56.1px,#fc8900 68.5px,#fd8900 81.0px,#fe8900 93.5px,#ff8900 106.0px,#0d8900 106.0px,#2d8900 118.5px,#478900 131.0px,#5f8900 143.5px,#768900 155.9px,#8b8900 168.4px,#a18900 212.0px)"></i>
<i style="top:182px;background:linear-gradient(90deg,#f78700 0.0px,#f98700 45.3px,#fa8700 57.4px,#fc8700 69.6px,#fd8700 81.7px,#fe8700 93.9px,#ff8700 106.0px,#0d8700 106.0px,#2d8700 118.1px,#478700 130.3px,#5f8700 142.4px,#768700 154.6px,#8b8700 166.7px,#a18700 212.0px)"></i>
<i style="top:184px;background:linear-gradient(90deg,#f78400 0.0px,#f98400 47.1px,#fa8400 58.9px,#fc8400 70.7px,#fd8400 82.4px,#fe8400 94.2px,#ff8400 106.0px,#0d8400 106.0px,#2d8400 117.8px,#478400 129.6px,#5f8400 141.3px,#768400 153.1px,#8b8400 164.9px,#a18400 212.0px)"></i>
<i style="top:186px;background:linear-gradient(90deg,#f78200 0.0px,#f98200 49.0px,#fa8200 60.4px,#fc8200 71.8px,#fd8200 83.2px,#fe8200 94.6px,#ff8200 106.0px,#0d8200 106.0px,#2d8200 117.4px,#478200 128.8px,#5f8200 140.2px,#768200 151.6px,#8b8200 163.0px,#a18200 212.0px)"></i>
<i style="top:188px;background:linear-gradient(90deg,#f77f00 0.0px,#f97f00 51.1px,#fa7f00 62.0px,#fc7f00 73.0px,#fd7f00 84.0px,#fe7f00 95.0px,#ff7f00 106.0px,#0d7f00 106.0px,#2d7f00 117.0px,#477f00 128.0px,#5f7f00 139.0px,#767f00 150.0px,#8b7f00 160.9px,#a17f00 212.0px)"></i>
<i style="top:190px;background:linear-gradient(90deg,#f77d00 0.0px,#f97d00 53.2px,#fa7d00 63.8px,#fc7d00 74.3px,#fd7d00 84.9px,#fe7d00 95.4px,#ff7d00 106.0px,#0d7d00 106.0px,#2d7d00 116.6px,#477d00 127.1px,#5f7d00 137.7px,#767d00 148.2px,#8b7d00 158.8px,#a17d00 212.0px)"></i>
<i style="top:192px;background:linear-gradient(90deg,#f77a00 0.0px,#f97a00 55.5px,#fa7a00 65.6px,#fc7a00 75.7px,#fd7a00 85.8px,#fe7a00 95.9px,#ff7a00 106.0px,#0d7a00 106.0px,#2d7a00 116.1px,#477a00 126.2px,#5f7a00 136.3px,#767a00 146.4px,#8b7a00 156.5px,#a17a00 212.0px)"></i>
<i style="top:194px;background:linear-gradient(90deg,#f77600 0.0px,#f97600 58.0px,#fa7600 67.6px,#fc7600 77.2px,#fd7600 86.8px,#fe7600 96.4px,#ff7600 106.0px,#0d7600 106.0px,#2d7600 115.6px,#477600 125.2px,#5f7600 134.8px,#767600 144.4px,#8b7600 154.0px,#a17600 212.0px)"></i>
<i style="top:196px;background:linear-gradient(90deg,#f77300 0.0px,#f97300 60.7px,#fa7300 69.8px,#fc7300 78.8px,#fd7300 87.9px,#fe7300 96.9px,#ff7300 106.0px,#0d7300 106.0px,#2d7300 115.1px,#477300 124.1px,#5f7300 133.2px,#767300 142.2px,#8b7300 151.3px,#a17300 212.0px)"></i>
<i style="top:198px;background:linear-gradient(90deg,#f76f00 0.0px,#f96f00 63.6px,#fa6f00 72.1px,#fc6f00 80.6px,#fd6f00 89.0px,#fe6f00 97.5px,#ff6f00 106.0px,#0d6f00 106.0px,#2d6f00 114.5px,#476f00 123.0px,#5f6f00 131.4px,#766f00 139.9px,#8b6f00 148.4px,#a16f00 212.0px)"></i>
<i style="top:200px;background:linear-gradient(90deg,#f76b00 0.0px,#f96b00 66.8px,#fa6b00 74.7px,#fc6b00 82.5px,#fd6b00 90.3px,#fe6b00 98.2px,#ff6b00 106.0px,#0d6b00 106.0px,#2d6b00 113.8px,#476b00 121.7px,#5f6b00 129.5px,#766b00 137.3px,#8b6b00 145.2px,#a16b00 212.0px)"></i>
<i style="top:202px;background:linear-gradient(90deg,#f76600 0.0px,#f96600 70.4px,#fa6600 77.5px,#fc6600 84.6px,#fd6600 91.8px,#fe6600 98.9px,#ff6600 106.0px,#0d6600 106.0px,#2d6600 113.1px,#476600 120.2px,#5f6600 127.4px,#766600 134.5px,#8b6600 141.6px,#a16600 212.0px)"></i>
<i style="top:204px;background:linear-gradient(90deg,#f76000 0.0px,#f96000 74.4px,#fa6000 80.7px,#fc6000 87.1px,#fd6000 93.4px,#fe6000 99.7px,#ff6000 106.0px,#0d6000 106.0px,#2d6000 112.3px,#476000 118.6px,#5f6000 124.9px,#766000 131.3px,#8b6000 137.6px,#a16000 212.0px)"></i>
<i style="top:206px;background:linear-gradient(90deg,#f75800 0.0px,#f95800 79.2px,#fa5800 84.6px,#fc5800 89.9px,#fd5800 95.3px,#fe5800 100.6px,#ff5800 106.0px,#0d5800 106.0px,#2d5800 111.4px,#475800 116.7px,#5f5800 122.1px,#765800 127.4px,#8b5800 132.8px,#a15800 212.0px)"></i>
<i style="top:208px;background:linear-gradient(90deg,#f74e00 0.0px,#f94e00 85.1px,#fa4e00 89.3px,#fc4e00 93.5px,#fd4e00 97.7px,#fe4e00 101.8px,#ff4e00 106.0px,#0d4e00 106.0px,#2d4e00 110.2px,#474e00 114.3px,#5f4e00 118.5px,#764e00 122.7px,#8b4e00 126.9px,#a14e00 212.0px)"></i>
<i style="top:210px;background:linear-gradient(90deg,#f73b00 0.0px,#f93b00 93.9px,#fa3b00 96.3px,#fc3b00 98.7px,#fd3b00 101.2px,#fe3b00 103.6px,#ff3b00 106.0px,#0d3b00 106.0px,#2d3b00 108.4px,#473b00 110.8px,#5f3b00 113.3px,#763b00 115.7px,#8b3b00 118.1px,#a13b00 212.0px)"></i>
 </div>
 </div>
</div>
<svg class="a" style="left:350px;top:222px" width="30" height="50" viewBox="0 0 30 50">
<rect x="0" y="11" width="14.5" height="2" fill="#fbcbf4"/>
<rect x="0" y="39" width="14.5" height="2" fill="#fbcbf4"/>
<circle cx="18.5" cy="12.5" r="4" fill="#262626" stroke="#fbcbf4" stroke-width="1"/>
<circle cx="18.5" cy="40" r="4" fill="#262626" stroke="#fbcbf4" stroke-width="1"/>
</svg>
</body></html>
